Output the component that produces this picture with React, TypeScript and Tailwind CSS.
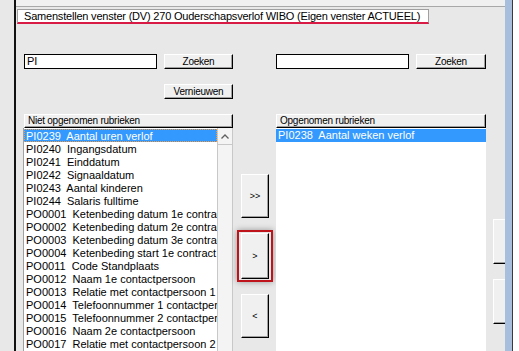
import React from "react";

const FONT = { fontFamily: '"Liberation Sans", Arial, sans-serif' };

const btn =
  "bg-[#f0f0f0] border border-t-white border-l-white border-r-black border-b-black shadow-[inset_-1px_-1px_0_#a0a0a0] flex items-center justify-center text-black";

const leftItems = [
  "PI0239  Aantal uren verlof",
  "PI0240  Ingangsdatum",
  "PI0241  Einddatum",
  "PI0242  Signaaldatum",
  "PI0243  Aantal kinderen",
  "PI0244  Salaris fulltime",
  "PO0001  Ketenbeding datum 1e contract",
  "PO0002  Ketenbeding datum 2e contract",
  "PO0003  Ketenbeding datum 3e contract",
  "PO0004  Ketenbeding start 1e contract",
  "PO0011  Code Standplaats",
  "PO0012  Naam 1e contactpersoon",
  "PO0013  Relatie met contactpersoon 1",
  "PO0014  Telefoonnummer 1 contactpersoon",
  "PO0015  Telefoonnummer 2 contactpersoon",
  "PO0016  Naam 2e contactpersoon",
  "PO0017  Relatie met contactpersoon 2",
  "PO0018  Telefoonnummer 1 contactpersoon 2",
];

function Header({ label }: { label: string }) {
  return (
    <div
      className={
        "h-[14px] bg-[#f0f0f0] border border-t-white border-l-white border-r-black border-b-black shadow-[inset_-1px_-1px_0_#a0a0a0] flex items-center pl-[3px] text-[10px] tracking-[-0.25px] leading-none text-black"
      }
    >
      {label}
    </div>
  );
}

export default function App() {
  return (
    <div
      className="w-[519px] h-[351px] flex overflow-hidden bg-[#e8e8e8] text-black"
      style={FONT}
    >
      <div className="w-[14px] shrink-0 bg-[#e8e8e8]" />
      <div className="w-[2px] shrink-0 bg-[#111]" />
      <div className="w-[489px] shrink-0 flex flex-col overflow-hidden">
        <div className="h-[7px] shrink-0 bg-[#f0f0f0] border-b border-[#a8a8a8]" />
        <div className="mt-[2px] ml-[1px] w-[412px] h-[15px] shrink-0 bg-white border-t border-l border-r border-[#a0a0a0] border-b-2 border-b-[#d81b45] pl-[6px] text-[11px] tracking-[-0.2px] leading-[12px] whitespace-nowrap overflow-hidden">
          Samenstellen venster (DV) 270 Ouderschapsverlof WIBO (Eigen venster ACTUEEL)
        </div>

        <div className="mt-[30px] flex flex-1 min-h-0 pl-[8px]">
          {/* Left column */}
          <div className="w-[209px] shrink-0 flex flex-col">
            <div className="flex h-[15px] items-stretch">
              <div className="w-[133px] bg-white border border-black text-[11px] leading-[13px] pl-[2px]">
                PI
              </div>
              <div className={btn + " ml-[7px] w-[69px] text-[10px] tracking-[-0.25px] leading-none"}>
                Zoeken
              </div>
            </div>
            <div className="flex justify-end mt-[15px]">
              <div className={btn + " w-[69px] h-[15px] text-[10px] tracking-[-0.25px] leading-none"}>
                Vernieuwen
              </div>
            </div>
            <div className="mt-[15px]">
              <Header label="Niet opgenomen rubrieken" />
            </div>
            <div className="flex flex-1 min-h-0 -ml-[1px] border-l border-[#a0a0a0]">
              <div className="w-[193px] bg-white pt-[1px] overflow-hidden">
                {leftItems.map((t, i) => (
                  <div
                    key={t}
                    className={
                      "h-[13px] pl-[1px] text-[11px] leading-[12px] whitespace-pre " +
                      (i === 0
                        ? "bg-[#3399ff] text-white border border-dotted border-[#f59a3c]"
                        : "border border-transparent")
                    }
                  >
                    {t}
                  </div>
                ))}
              </div>
              <div className="w-[16px] bg-[#f4f4f4] border-l border-r border-[#c8c8c8] pt-[1px]">
                <div className="h-[16px] border-b border-[#c8c8c8] flex items-center justify-center">
                  <svg width="8" height="5" viewBox="0 0 8 5">
                    <path d="M0.5 4.5 L4 1 L7.5 4.5" fill="none" stroke="#606060" strokeWidth="1.3" />
                  </svg>
                </div>
              </div>
            </div>
          </div>

          {/* Middle column */}
          <div className="w-[43px] shrink-0 flex flex-col pt-[120px]">
            <div className={btn + " ml-[8px] w-[28px] h-[44px] text-[9px] leading-none"}>
              {">>"}
            </div>
            <div className="ml-[4px] mt-[12px] w-[36px] h-[52px] border-2 border-[#c0141c] px-[2px] py-[1px] shadow-[0_0_6px_rgba(0,0,0,0.35)]">
              <div className={btn + " w-[28px] h-[46px] text-[9px] leading-none"}>{">"}</div>
            </div>
            <div className={btn + " ml-[8px] mt-[12px] w-[28px] h-[44px] text-[9px] leading-none"}>
              {"<"}
            </div>
          </div>

          {/* Right column */}
          <div className="w-[210px] shrink-0 flex flex-col">
            <div className="flex h-[15px] items-stretch">
              <div className="w-[133px] bg-white border border-black" />
              <div className={btn + " ml-[7px] w-[70px] text-[10px] tracking-[-0.25px] leading-none"}>
                Zoeken
              </div>
            </div>
            <div className="mt-[45px]">
              <Header label="Opgenomen rubrieken" />
            </div>
            <div className="flex-1 bg-white pt-[1px]">
              <div className="h-[13px] pl-[2px] bg-[#3399ff] text-white text-[11px] leading-[13px] whitespace-pre">
                PI0238  Aantal weken verlof
              </div>
            </div>
          </div>

          {/* Gutter with clipped buttons */}
          <div className="w-[19px] shrink-0 flex flex-col pt-[165px] pl-[7px]">
            <div className="w-[12px] h-[45px] bg-[#f0f0f0] border-t border-l border-white border-b border-b-black shadow-[inset_0_-1px_0_#a0a0a0]" />
            <div className="mt-[15px] w-[12px] h-[45px] bg-[#f0f0f0] border-t border-l border-white border-b border-b-black shadow-[inset_0_-1px_0_#a0a0a0]" />
          </div>
        </div>
      </div>
      <div className="w-[7px] shrink-0 bg-[#a7bfdc]" />
      <div className="w-[1px] shrink-0 bg-[#3a3a3a]" />
      <div className="w-[6px] shrink-0 bg-white" />
    </div>
  );
}
